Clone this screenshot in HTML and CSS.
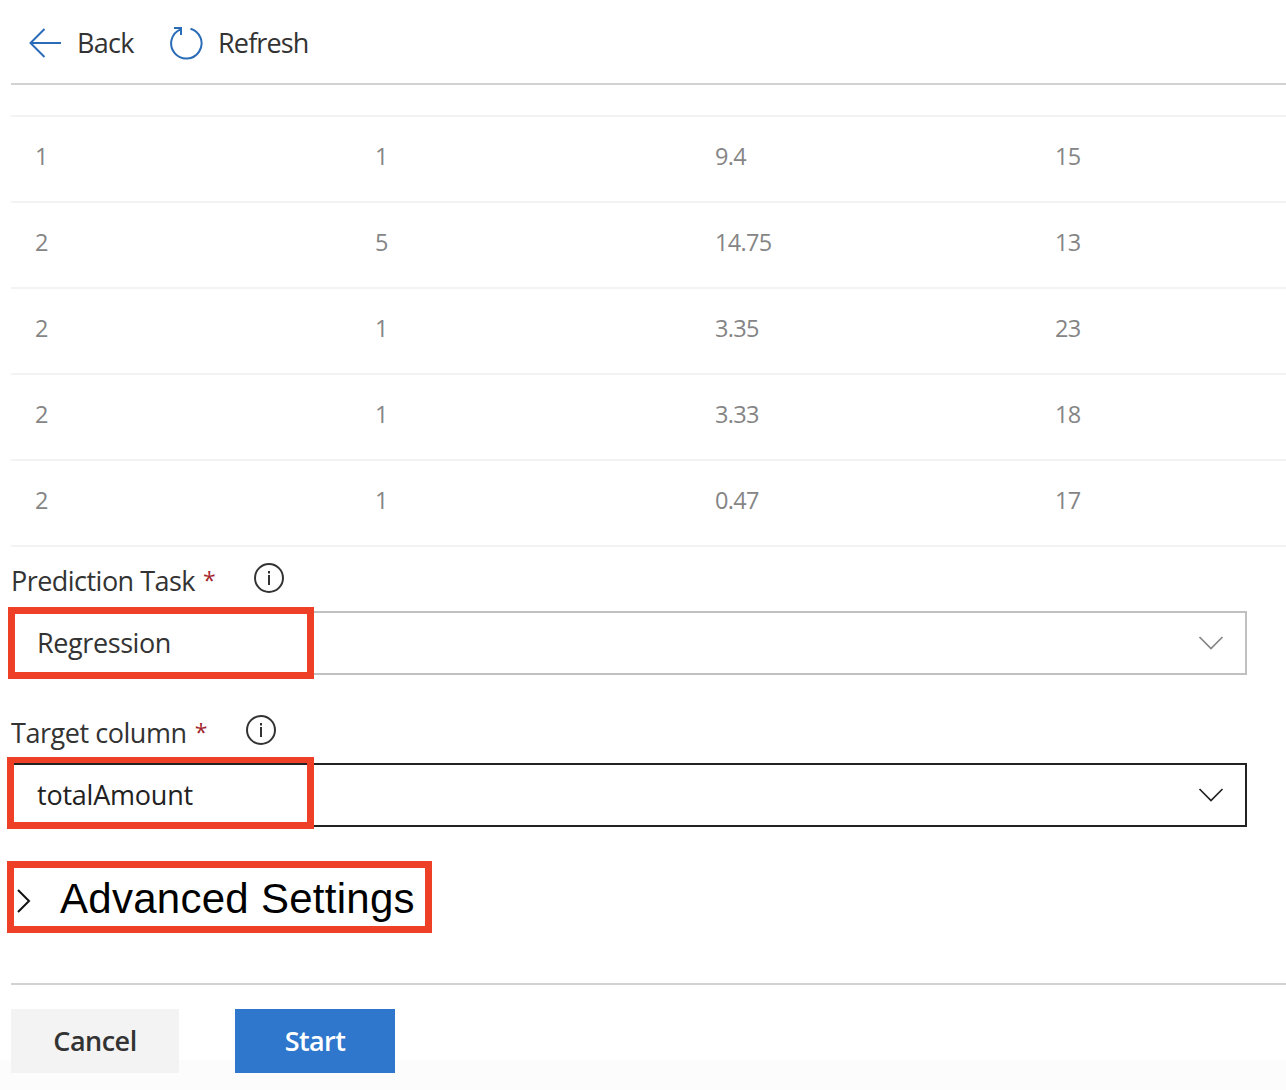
FILE: index.html
```html
<!DOCTYPE html>
<html lang="en">
<head>
<meta charset="utf-8">
<title>Automated ML</title>
<link rel="stylesheet" href="styles.css">
</head>
<body>
<main class="panel">
  <nav class="toolbar">
    <button class="command back">
      <svg width="34" height="32" viewBox="0 0 34 32" fill="none" stroke="#2b6cb8" stroke-width="2"><path d="M33 16H2.500M16.500 2 2.500 16l14 14"/></svg>
      <span class="back-label">Back</span>
    </button>
    <button class="command refresh">
      <svg width="34" height="34" viewBox="0 0 34 34" fill="none" stroke="#2b6cb8" stroke-width="2"><path d="M21.500 2.700A15.200 15.200 0 1 1 11.500 3.300M5 2h7v7"/></svg>
      <span class="refresh-label">Refresh</span>
    </button>
  </nav>
  <section class="preview">
    <div class="row"><span>1</span><span>1</span><span>9.4</span><span>15</span></div>
    <div class="row"><span>2</span><span>5</span><span>14.75</span><span>13</span></div>
    <div class="row"><span>2</span><span>1</span><span>3.35</span><span>23</span></div>
    <div class="row"><span>2</span><span>1</span><span>3.33</span><span>18</span></div>
    <div class="row"><span>2</span><span>1</span><span>0.47</span><span>17</span></div>
  </section>
  <section class="field">
    <div class="label task-label">
      <span class="task-text">Prediction Task</span><span class="required">*</span>
      <svg class="info" width="32" height="32" viewBox="0 0 32 32" fill="none" stroke="#333" stroke-width="2"><circle cx="16" cy="16" r="14"/><path d="M16 13v10M16 9v2.400"/></svg>
    </div>
    <div class="select">
      <span class="task-value">Regression</span>
      <svg width="26" height="16" viewBox="0 0 26 16" fill="none" stroke="#858585" stroke-width="1.700"><path d="m1.500 2 11.500 11.500L24.500 2"/></svg>
      <i class="mark mark-task"></i>
    </div>
  </section>
  <section class="field">
    <div class="label target-label">
      <span class="target-text">Target column</span><span class="required">*</span>
      <svg class="info" width="32" height="32" viewBox="0 0 32 32" fill="none" stroke="#333" stroke-width="2"><circle cx="16" cy="16" r="14"/><path d="M16 13v10M16 9v2.400"/></svg>
    </div>
    <div class="select active">
      <span class="target-value">totalAmount</span>
      <svg width="26" height="16" viewBox="0 0 26 16" fill="none" stroke="#222" stroke-width="1.700"><path d="m1.500 2 11.500 11.500L24.500 2"/></svg>
      <i class="mark mark-target"></i>
    </div>
  </section>
  <section class="advanced">
    <svg width="16" height="26" viewBox="0 0 16 26" fill="none" stroke="#111" stroke-width="2"><path d="m2 2 11 11L2 24"/></svg>
    <span class="advanced-text">Advanced Settings</span>
    <i class="mark mark-advanced"></i>
  </section>
  <footer class="actions">
    <button class="button cancel">Cancel</button>
    <button class="button start">Start</button>
  </footer>
</main>
</body>
</html>
```
FILE: styles.css
```css
* { box-sizing: border-box; }
body {
  margin: 0;
  background: #fff;
  color: #333;
  font-family: "Open Sans", "Noto Sans", sans-serif;
  font-size: 27px;
  overflow: hidden;
}
button { border: 0; padding: 0; background: none; color: inherit; font: inherit; }
svg { display: block; flex: none; }
.panel { height: 1090px; padding-left: 11px; background: linear-gradient(#fff 1060px, #fcfcfc 1060px); }
.toolbar {
  display: flex;
  height: 85px;
  padding: 2px 0 0 17px;
  border-bottom: 2px solid #d2d2d2;
}
.command { display: flex; align-items: center; height: 82px; white-space: nowrap; }
.command span { padding-bottom: 2px; }
.back { width: 141px; gap: 15px; }
.refresh { gap: 15px; }
.back-label { letter-spacing: -.75px; }
.refresh-label { letter-spacing: -.85px; }
.preview { margin-top: 30px; border-top: 2px solid #f3f3f3; color: #858585; font-size: 23.500px; }
.row {
  display: grid;
  grid-template-columns: 340px 340px 340px 1fr;
  align-items: center;
  height: 86px;
  padding: 0 0 6px 24px;
  border-bottom: 2px solid #f3f3f3;
  letter-spacing: -.7px;
}
.field { height: 152px; width: 1236px; }
.label { display: flex; height: 64px; line-height: 68px; white-space: nowrap; }
.required { margin-left: 8px; color: #a4262c; font-size: 23px; line-height: 66px; }
.info { margin: 15px 0 0 auto; }
.task-label { width: 274px; }
.target-label { width: 266px; }
.task-text { letter-spacing: -.53px; }
.target-text { letter-spacing: -.45px; }
.task-value { letter-spacing: -.4px; }
.target-value { letter-spacing: -.22px; }
.select {
  position: relative;
  display: flex;
  align-items: center;
  justify-content: space-between;
  height: 64px;
  padding: 0 21px 0 24px;
  border: 2px solid #c0c0c0;
}
.select span { padding-bottom: 1px; }
.active { border-color: #222; color: #222; }
.mark { position: absolute; border: 7px solid #ee4026; }
.mark-task { left: -5px; top: -6px; width: 306px; height: 72px; }
.mark-target { left: -6px; top: -8px; width: 307px; height: 72px; border-top-width: 6px; }
.advanced {
  position: relative;
  display: flex;
  align-items: center;
  height: 132px;
  padding: 0 0 32px 5px;
  color: #000;
  font-family: "Liberation Sans", sans-serif;
  font-size: 42px;
}
.advanced-text { margin-left: 28px; padding-bottom: 4px; white-space: nowrap; letter-spacing: .27px; }
.mark-advanced { left: -4px; top: 10px; width: 425px; height: 72px; }
.actions { display: flex; gap: 56px; border-top: 2px solid #d2d2d2; padding-top: 24px; }
.button { height: 64px; padding-bottom: 1px; font-weight: 600; }
.cancel { width: 168px; background: #f3f3f3; letter-spacing: -.5px; }
.start { width: 160px; background: #2f77cd; color: #fff; letter-spacing: -.6px; }
```
